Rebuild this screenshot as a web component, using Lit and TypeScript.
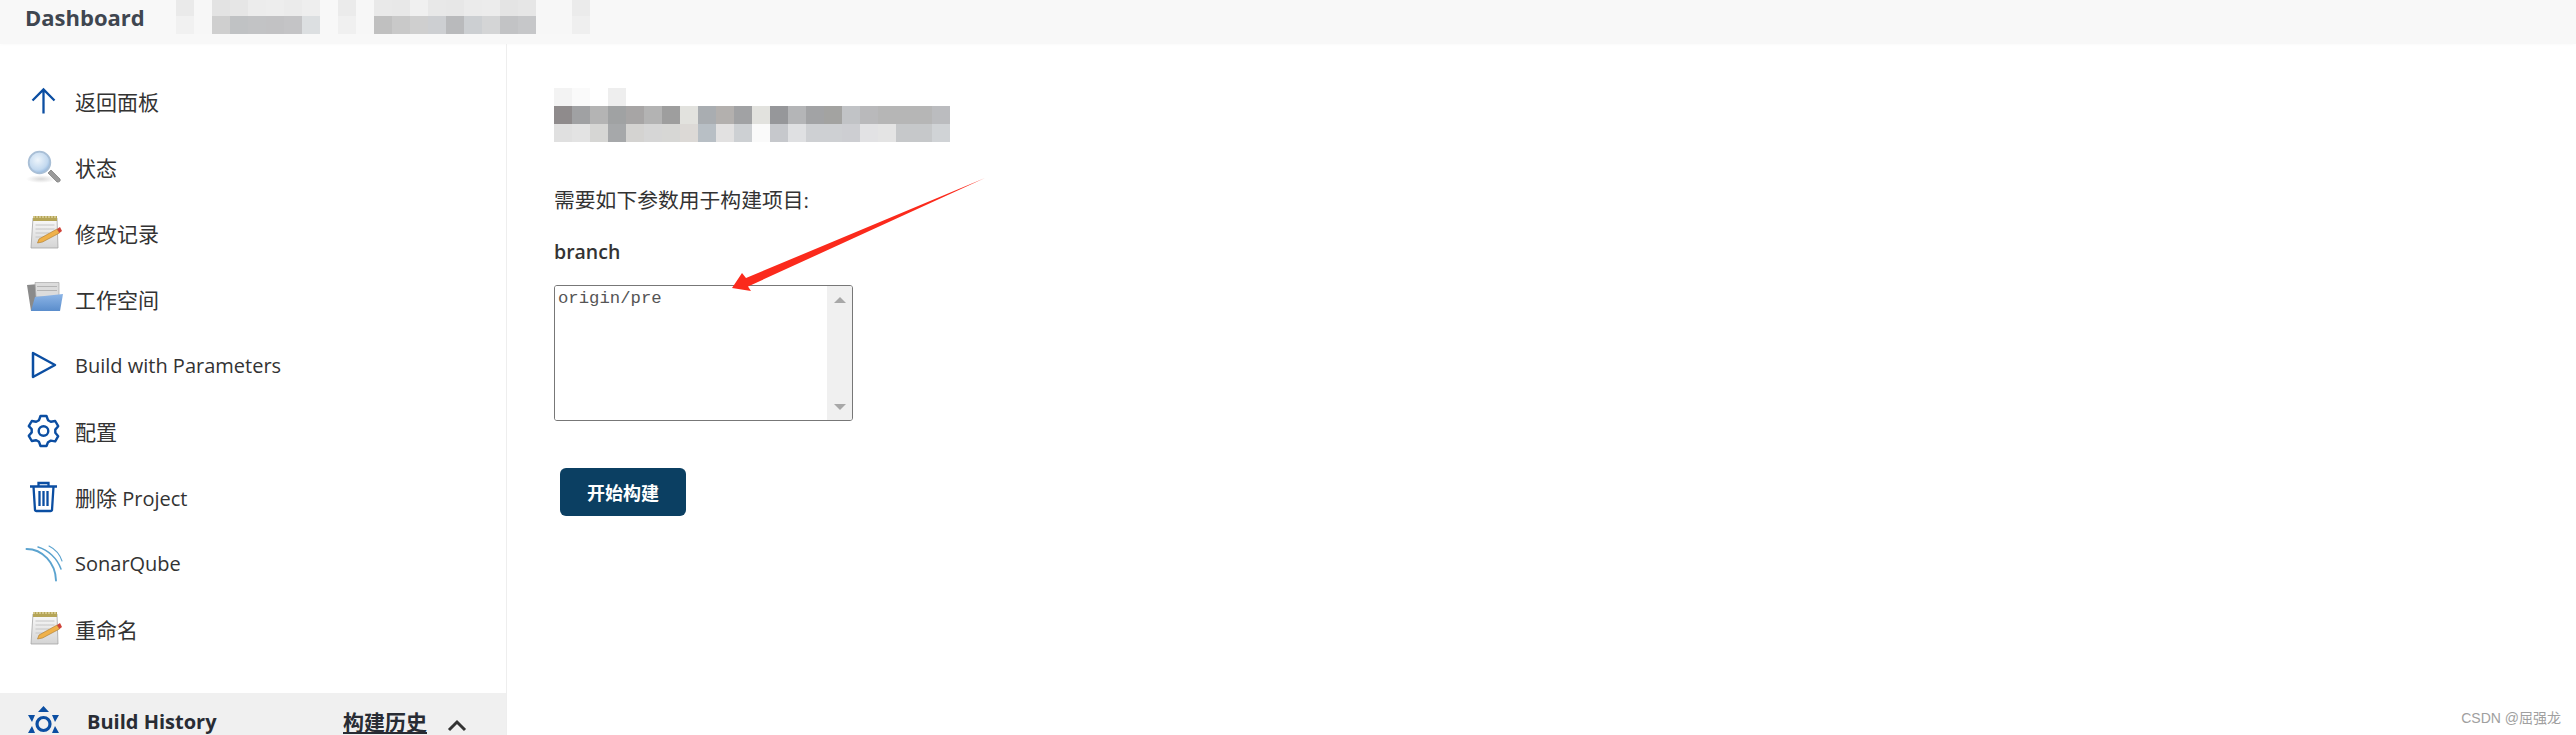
import { LitElement, html, css, svg } from "lit";
import { customElement } from "lit/decorators.js";

const headerRows = [
  ["#eaeaea","#f7f7f7","#e3e3e3","#e6e6e6","#ececec","#ededed","#ebebeb","#eeeeee","#f8f8f8","#ebebeb","#f7f7f7","#e9e9e9","#e8e8e8","#f0f0f0","#e8e8e8","#e7e7e7","#ebebeb","#ececec","#e4e4e4","#e6e6e6","#f7f7f7","#f7f7f7","#ebebeb"],
  ["#f1f1f1","#f7f7f7","#cfcfcf","#c0c2c4","#c2c3c5","#c2c2c4","#c4c4c6","#dcdfe1","#f8f8f8","#f0f0f0","#f7f7f7","#c0c0c0","#c9c9c9","#cfcfcf","#cdcfd2","#b9babc","#cccfd2","#d4d5d6","#c2c3c5","#c6c7c9","#f7f7f7","#f7f7f7","#efefef"],
];
const titleRows = [
  ["#f3f3f3","#fafafa","#ffffff","#eeeeee","#ffffff","#ffffff","#ffffff","#ffffff","#ffffff","#ffffff","#ffffff","#ffffff","#ffffff","#ffffff","#ffffff","#ffffff","#ffffff","#ffffff","#ffffff","#ffffff","#ffffff","#ffffff"],
  ["#8f8b8c","#a0a1a3","#b4b4b4","#a0a2a3","#a7a5a5","#b3b3b3","#9e9e9e","#e2e2de","#a9adb1","#b3b0ae","#a1a2a4","#e2e2de","#96979a","#b4b5b7","#a2a3a5","#a3a3a1","#c1c3c6","#b9b9bb","#b6b6b6","#b6b6b6","#b6b6b6","#bbbcbf"],
  ["#e0e0e0","#e3e3e3","#d6d6d4","#a6a8aa","#d4d3d1","#d6d6d6","#d7d7d5","#dcd9d6","#b8bfc5","#e2e1e1","#cdd0d3","#fafafa","#c6c8cc","#dfe0e2","#ced0d3","#ced0d3","#cdced2","#e2e2e4","#e4e4e4","#c6c8ca","#c6c8ca","#d0d3d6"],
];

const blue = "#0b4ea2";
const up = svg`<path d="M17.500 6.500v24M6.500 17.500 17.500 6.500l11 11" fill="none" stroke="${blue}" stroke-width="2.300"/>`;
const lens = svg`<defs><radialGradient id="lg" cx=".42" cy=".38" r=".65"><stop offset="0" stop-color="#eef5fb"/><stop offset=".7" stop-color="#c3d9ef"/><stop offset="1" stop-color="#8fb4dc"/></radialGradient><radialGradient id="ls"><stop offset="0" stop-color="#d8d8d8"/><stop offset="1" stop-color="#ffffff"/></radialGradient></defs>
<ellipse cx="15" cy="30" rx="15" ry="4" fill="url(#ls)"/>
<path d="M22 24l3-3 9 9c1 2-1 3.500-3 3z" fill="#9a9a9a" stroke="#777" stroke-width=".7"/>
<circle cx="13.500" cy="13.500" r="10.800" fill="url(#lg)" stroke="#a9bfd6" stroke-width="1.800"/>`;
const pad = (id: string) => svg`<defs><linearGradient id="${id}" x1="0" y1="0" x2="0" y2="1"><stop offset="0" stop-color="#fafafa"/><stop offset="1" stop-color="#d4d4d4"/></linearGradient></defs>
<path d="M7 3h24l1 30H5z" fill="url(#${id})" stroke="#a4a4a4" stroke-width=".8"/>
<rect x="7" y="1" width="24" height="5" fill="#b5a557"/>
<path d="M8 1v2M11 1v2M14 1v2M17 1v2M20 1v2M23 1v2M26 1v2M29 1v2" stroke="#f0e8c0" stroke-width="1"/>
<path d="M9.500 10h19M9.500 14h19M9.500 18h14M9.500 22h9" stroke="#c6c6c6" stroke-width="1"/>
<path d="M13 24 31 14l2.500 4-17 9-5 1z" fill="#efb14a" stroke="#a9772a" stroke-width=".6"/>
<path d="M31 14l3-2 2 4-2.500 2z" fill="#cf4338"/>`;
const folder = svg`<defs><linearGradient id="fg" x1="0" y1="0" x2="0" y2="1"><stop offset="0" stop-color="#8db5e6"/><stop offset="1" stop-color="#5a8dcc"/></linearGradient></defs>
<path d="M1 4l12-1v3h10v24H5z" fill="#8a8a8a"/>
<path d="M9 1.500h24V16H10z" fill="#dcdcdc" stroke="#a8a8a8" stroke-width=".7"/>
<path d="M11 5.500h20M11 9.500h20" stroke="#b4b4b4" stroke-width="1"/>
<path d="M9 16l28-3-3 17H5z" fill="url(#fg)"/>`;
const play = svg`<path d="M7 6 29 18 7 30z" fill="none" stroke="${blue}" stroke-width="2.500" stroke-linejoin="round"/>`;
const gear = svg`<g transform="translate(1.500 1)"><path d="M13 2h6l1.500 4.200 2.800 1.600 4.400-.8 3 5.200-2.900 3.400v3.200l2.900 3.400-3 5.200-4.400-.8-2.800 1.600L19 32h-6l-1.500-4.200-2.800-1.600-4.400.8-3-5.200 2.900-3.400v-3.200L1.300 12.200l3-5.200 4.400.8 2.800-1.600z" fill="none" stroke="${blue}" stroke-width="2.400" stroke-linejoin="round"/><circle cx="16" cy="17" r="4.800" fill="none" stroke="${blue}" stroke-width="2.400"/></g>`;
const trash = svg`<path d="M4 7.500h27M12.500 7.500V4h10v3.500M7.500 7.500l1.500 23.500a1.500 1.500 0 0 0 1.500 1h14a1.500 1.500 0 0 0 1.500-1l1.500-23.500M13.500 12v15M17.500 12v15M21.500 12v15" fill="none" stroke="${blue}" stroke-width="2.300"/>`;
const sonar = svg`<g fill="none" stroke="#5ba3cf" stroke-linecap="round"><path d="M.5 4c16 0 29 14 29.500 31.500" stroke-width="1.900"/><path d="M12 2c10 3 19 11 23 22" stroke-width="1.500"/><path d="M23 1c6 3 11 9 13 15" stroke-width="1.100"/></g>`;
const history = svg`<circle cx="17.500" cy="24" r="6.500" fill="none" stroke="${blue}" stroke-width="3.200"/><path d="M17.500 6l5.500 6H12zM2 15h7l-3 7zM33 15h-7l3 7zM2 33h7l-3-7zM33 33h-7l3-7z" fill="${blue}"/>`;

const zh = (t: string) => html`<span class="cjk">${t}</span>`;
const items = [
  [up, zh("返回面板")],
  [lens, zh("状态")],
  [pad("p1"), zh("修改记录")],
  [folder, zh("工作空间")],
  [play, html`Build with Parameters`],
  [gear, zh("配置")],
  [trash, html`${zh("删除")} Project`],
  [sonar, html`SonarQube`],
  [pad("p2"), zh("重命名")],
] as const;

@customElement("app-root")
export class AppRoot extends LitElement {
  static styles = css`
    :host {
      display: block;
      position: relative;
      width: 2576px;
      height: 735px;
      overflow: hidden;
      background: #fff;
      color: #333;
      font-family: "Open Sans", "Noto Sans CJK SC", sans-serif;
    }
    .top {
      display: flex;
      align-items: flex-start;
      height: 44px;
      background: #f8f8f8;
      box-shadow: 0 1px 3px rgba(0, 0, 0, 0.02);
    }
    .crumb {
      width: 176px;
      padding: 3px 0 0 25px;
      box-sizing: border-box;
      font-size: 22px;
      font-weight: 700;
      line-height: 28px;
      color: #3f4650;
    }
    .mosaic { display: grid; }
    .mosaic.head { grid-template-columns: repeat(23, 18px); grid-template-rows: 16px 18px; }
    .mosaic.title { grid-template-columns: repeat(22, 18px); grid-auto-rows: 18px; }
    .body { display: flex; height: 691px; }
    .side {
      display: flex;
      flex-direction: column;
      width: 507px;
      box-sizing: border-box;
      border-right: 1px solid #eeeeee;
    }
    .nav { flex: 1; padding-top: 24px; }
    .item {
      display: flex;
      align-items: center;
      height: 66px;
      padding-left: 26px;
      gap: 13px;
      font-size: 20px;
      font-weight: 500;
      color: #333;
      white-space: pre;
    }
    .item svg { width: 36px; height: 36px; flex: none; overflow: visible; }
    .cjk { font-size: 21px; font-weight: 400; }
    .hist {
      display: flex;
      align-items: flex-start;
      height: 42px;
      background: #f0f0f0;
      padding-left: 26px;
      font-weight: 700;
      line-height: 24px;
      color: #282c34;
    }
    .hist svg.ic { width: 36px; height: 36px; flex: none; margin-top: 7px; }
    .hist .name { font-size: 20px; margin: 17px 0 0 25px; width: 256px; }
    .hist .zh { font-size: 21px; margin-top: 17px; text-decoration: underline; }
    .hist .chev { width: 20px; height: 14px; margin: 25px 0 0 20px; }
    .main { flex: 1; padding: 44px 0 0 47px; }
    .intro { margin: 44px 0 0; font-size: 20.800px; line-height: 28px; }
    .label { margin-top: 24px; font-size: 19.500px; font-weight: 600; line-height: 28px; color: #333; }
    .field {
      display: flex;
      width: 299px;
      height: 136px;
      margin-top: 19px;
      box-sizing: border-box;
      border: 1px solid #777;
      border-radius: 3px;
      overflow: hidden;
    }
    .field textarea {
      flex: 1;
      border: 0;
      outline: 0;
      padding: 2px 3px;
      resize: none;
      overflow: hidden;
      font-family: "Liberation Mono", monospace;
      font-size: 17.300px;
      line-height: 22px;
      color: #555;
    }
    .bar {
      display: flex;
      flex-direction: column;
      align-items: center;
      justify-content: space-between;
      width: 25px;
      padding: 11px 0 10px;
      box-sizing: border-box;
      background: #f0f0f0;
    }
    .tri { width: 0; height: 0; border-left: 6px solid transparent; border-right: 6px solid transparent; }
    .tri.a { border-bottom: 6px solid #a8a8a8; }
    .tri.b { border-top: 6px solid #a8a8a8; }
    .go {
      display: block;
      width: 126px;
      height: 48px;
      margin: 47px 0 0 6px;
      border: 0;
      border-radius: 6px;
      background: #0b3f62;
      color: #fff;
      font: 700 18px "Open Sans", "Noto Sans CJK SC", sans-serif;
    }
    .arrow { position: absolute; left: 720px; top: 170px; width: 280px; height: 130px; }
    .mark {
      position: absolute;
      right: 15px;
      bottom: 8px;
      font-size: 14px;
      line-height: 18px;
      color: #a0a0a0;
      font-family: "Liberation Sans", "Noto Sans CJK SC", sans-serif;
    }
  `;

  private mosaic(rows: string[][], cls: string) {
    return html`<div class="mosaic ${cls}">
      ${rows.flat().map((c) => html`<span style="background:${c}"></span>`)}
    </div>`;
  }

  render() {
    return html`
      <div class="top">
        <div class="crumb">Dashboard</div>
        ${this.mosaic(headerRows, "head")}
      </div>
      <div class="body">
        <aside class="side">
          <nav class="nav">
            ${items.map(
              ([icon, label]) => html`<div class="item">
                <svg viewBox="0 0 36 36">${icon}</svg><span>${label}</span>
              </div>`
            )}
          </nav>
          <div class="hist">
            <svg class="ic" viewBox="0 0 36 36">${history}</svg>
            <span class="name">Build History</span>
            <span class="zh">构建历史</span>
            <svg class="chev" viewBox="0 0 20 14"><path d="M2 12l8-8 8 8" fill="none" stroke="#333" stroke-width="3"/></svg>
          </div>
        </aside>
        <main class="main">
          ${this.mosaic(titleRows, "title")}
          <p class="intro">需要如下参数用于构建项目:</p>
          <div class="label">branch</div>
          <div class="field">
            <textarea .value=${"origin/pre"}></textarea>
            <div class="bar"><i class="tri a"></i><i class="tri b"></i></div>
          </div>
          <button class="go">开始构建</button>
        </main>
      </div>
      <svg class="arrow" viewBox="0 0 280 130">
        <path d="M12 118 22 103 26 108 265 8 28 116.500 31 121z" fill="#fb2a1c"/>
      </svg>
      <div class="mark">CSDN @屈强龙</div>
    `;
  }
}
